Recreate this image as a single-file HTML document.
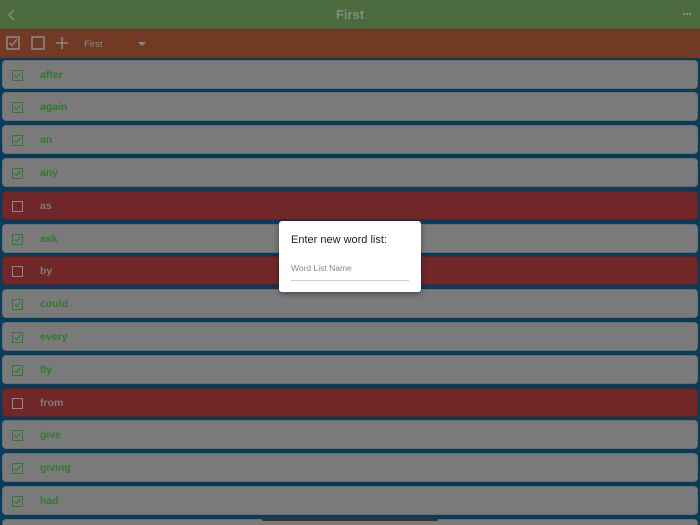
<!DOCTYPE html>
<html><head><style>
*{margin:0;padding:0;box-sizing:border-box}
html,body{width:700px;height:525px;overflow:hidden}
body{background:#053d5b;font-family:"Liberation Sans",sans-serif;position:relative}
.hdr{position:absolute;left:0;top:0;width:700px;height:29px;background:#4b6a3e;color:#7f8f78;text-align:center;font-weight:bold;font-size:13px;line-height:29px}
.tb{position:absolute;left:0;top:29px;width:700px;height:29px;background:#723a24;border-top:1px solid #5f3a22}
.row{position:absolute;left:2px;width:696px;height:29px;border-radius:4px;background:#7a7a7a;border:1px solid #6d6d6d}
.row.r{background:#712727;border-color:#642020}
.row span{position:absolute;left:37px;top:8px;font-size:10.5px;font-weight:bold;color:#2f7a2c}
.row.r span{color:#7c7c7c}
.cb{position:absolute;left:9px;top:9px;width:11px;height:11px}
</style></head><body>
<div class="hdr">First</div>
<svg style="position:absolute;left:7px;top:8px" width="10" height="14"><path d="M7 2 L2 7 L7 12" stroke="#7f8f78" stroke-width="1.5" fill="none"/></svg>
<div style="position:absolute;left:683px;top:13px;width:8px;height:2px;border-top:2px dotted #8a8a8a"></div>
<div class="tb"></div>
<svg style="position:absolute;left:0;top:29px" width="160" height="29">
<rect x="7" y="8" width="12" height="12" fill="none" stroke="#8a8a8a" stroke-width="1.5"/>
<path d="M9.5 14 L12 16.5 L17 10" stroke="#8a8a8a" stroke-width="1.3" fill="none"/>
<rect x="32" y="8" width="12" height="12" fill="none" stroke="#8a8a8a" stroke-width="1.5"/>
<path d="M62 8 V20 M56 14 H68" stroke="#8a8a8a" stroke-width="1.5"/>
<text x="84" y="18" font-size="9.5" fill="#8a8a8a" font-family="Liberation Sans">First</text>
<path d="M138 13 H146 L142 17 Z" fill="#8a8a8a"/>
</svg>
<svg width="0" height="0" style="position:absolute"><defs>
<symbol id="c" viewBox="0 0 11 11"><rect x="0.5" y="0.5" width="10" height="10" fill="none" stroke="#2f7a2c"/><path d="M2.5 5.5 L4.5 7.5 L8.5 3" stroke="#2f7a2c" fill="none"/></symbol>
<symbol id="u" viewBox="0 0 11 11"><rect x="0.5" y="0.5" width="10" height="10" fill="none" stroke="#8a8a8a"/></symbol>
</defs></svg>
<div class="row" style="top:60px"><svg class="cb"><use href="#c"/></svg><span>after</span></div>
<div class="row" style="top:92px"><svg class="cb"><use href="#c"/></svg><span>again</span></div>
<div class="row" style="top:125px"><svg class="cb"><use href="#c"/></svg><span>an</span></div>
<div class="row" style="top:158px"><svg class="cb"><use href="#c"/></svg><span>any</span></div>
<div class="row r" style="top:191px"><svg class="cb"><use href="#u"/></svg><span>as</span></div>
<div class="row" style="top:224px"><svg class="cb"><use href="#c"/></svg><span>ask</span></div>
<div class="row r" style="top:256px"><svg class="cb"><use href="#u"/></svg><span>by</span></div>
<div class="row" style="top:289px"><svg class="cb"><use href="#c"/></svg><span>could</span></div>
<div class="row" style="top:322px"><svg class="cb"><use href="#c"/></svg><span>every</span></div>
<div class="row" style="top:355px"><svg class="cb"><use href="#c"/></svg><span>fly</span></div>
<div class="row r" style="top:388px"><svg class="cb"><use href="#u"/></svg><span>from</span></div>
<div class="row" style="top:420px"><svg class="cb"><use href="#c"/></svg><span>give</span></div>
<div class="row" style="top:453px"><svg class="cb"><use href="#c"/></svg><span>giving</span></div>
<div class="row" style="top:486px"><svg class="cb"><use href="#c"/></svg><span>had</span></div>
<div class="row" style="top:519px;height:8px"></div>
<div style="position:absolute;left:262px;top:518px;width:176px;height:3px;background:#333;border-radius:2px"></div>
<div style="position:absolute;left:279px;top:221px;width:142px;height:71px;background:#fff;border-radius:3px;box-shadow:0 2px 6px rgba(0,0,0,.4)">
<div style="position:absolute;left:12px;top:13px;font-size:11px;color:#222">Enter new word list:</div>
<div style="position:absolute;left:12px;top:42px;font-size:8.5px;color:#888">Word List Name</div>
<div style="position:absolute;left:12px;top:59px;width:118px;height:1px;background:#ccc"></div>
</div>
</body></html>
